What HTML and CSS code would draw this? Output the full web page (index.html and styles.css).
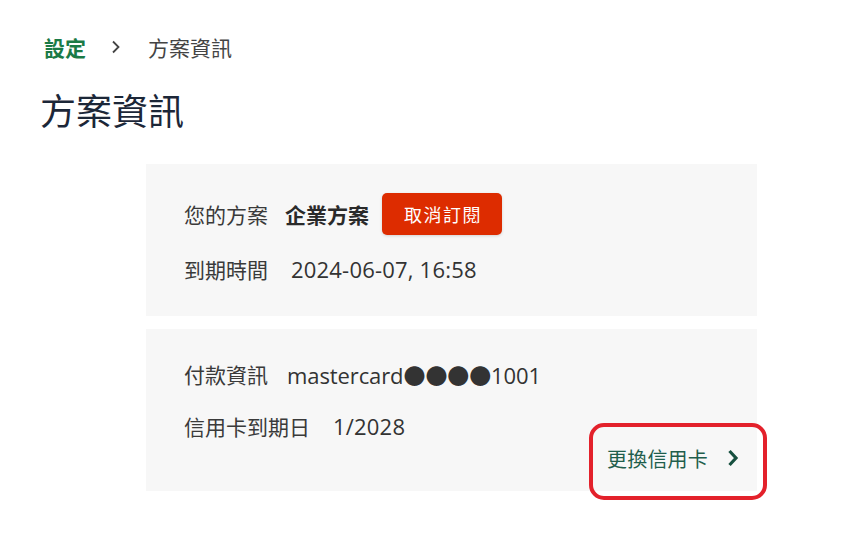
FILE: index.html
```html
<!DOCTYPE html>
<html lang="zh-Hant">
<head>
  <meta charset="UTF-8">
  <meta name="viewport" content="width=device-width, initial-scale=1.0">
  <title>方案資訊</title>
  <link rel="stylesheet" href="styles.css">
</head>
<body>
  <nav class="breadcrumb">
    <a href="#" class="crumb-link">設定</a>
    <svg class="crumb-sep" width="12" height="14" viewBox="0 0 12 14"><path d="M3 1.5 L8.5 7 L3 12.5" fill="none" stroke="currentColor" stroke-width="1.8"/></svg>
    <span class="crumb-current">方案資訊</span>
  </nav>
  <h1>方案資訊</h1>

  <main class="plan">
    <section class="card">
      <div class="row">
        <span class="label">您的方案</span>
        <strong class="plan-name">企業方案</strong>
        <button class="cancel">取消訂閱</button>
      </div>
      <div class="row">
        <span class="label">到期時間</span>
        <span class="value">2024-06-07, 16:58</span>
      </div>
    </section>

    <section class="card">
      <div class="row">
        <span class="label">付款資訊</span>
        <span class="value card-no">mastercard●●●●1001</span>
      </div>
      <div class="row">
        <span class="label">信用卡到期日</span>
        <span class="value">1/2028</span>
      </div>
      <div class="card-actions">
        <a href="#" class="change-card">
          更換信用卡
          <svg width="12" height="18" viewBox="0 0 12 18"><path d="M2.5 2 L9 9 L2.5 16" fill="none" stroke="currentColor" stroke-width="3.2"/></svg>
          <span class="highlight"></span>
        </a>
      </div>
    </section>
  </main>
</body>
</html>
```

FILE: styles.css
```css
body {
  font-family: "Open Sans", "Noto Sans CJK TC", sans-serif;
  color: #333;
  background: white;
  margin: 0;
  padding: 26px 40px;
}
.breadcrumb {
  display: flex;
  align-items: center;
  font-size: 21px;
  height: 42px;
  padding-left: 4px;
}
.crumb-link {
  color: #1b7a46;
  font-weight: bold;
  text-decoration: none;
}
.crumb-sep {
  margin: 0 26px 0 24px;
  color: #444;
}
.crumb-current {
  color: #444;
}
h1 {
  margin: 22px 0 30px;
  font-size: 36px;
  font-weight: normal;
  color: #1c2738;
  line-height: 44px;
}
.plan {
  margin-left: 106px;
  width: 611px;
}
.card {
  background: #f7f7f7;
  padding: 29px 38px 32px;
  margin-bottom: 13px;
  display: flex;
  flex-direction: column;
  gap: 19px;
}
.card + .card {
  padding-top: 29px;
  padding-bottom: 18px;
  gap: 21px;
}
.row {
  display: flex;
  align-items: center;
  min-height: 30px;
  font-size: 21px;
}
.label {
  margin-right: 19px;
  color: #3a3a3a;
}
.plan-name {
  color: #2a2a2a;
  margin-right: 13px;
  margin-left: -2px;
}
.value {
  font-size: 22px;
  letter-spacing: 0.2px;
  margin-left: 4px;
  color: #333;
}
.card-no {
  font-weight: 500;
  letter-spacing: -0.1px;
  margin-left: 0;
}
.cancel {
  background: #dd2c00;
  color: white;
  border: none;
  border-radius: 5px;
  font-family: inherit;
  font-size: 18px;
  letter-spacing: 1.5px;
  height: 42px;
  padding: 0 20px 0 22px;
  box-shadow: 0 1px 3px rgba(0,0,0,0.15);
}
.card-actions {
  display: flex;
  justify-content: flex-end;
  margin: -19px -20px 0 0;
}
.change-card {
  position: relative;
  display: flex;
  align-items: center;
  gap: 19px;
  font-size: 20px;
  letter-spacing: 0.2px;
  color: #1f5e4c;
  text-decoration: none;
  height: 30px;
}
.change-card svg {
  color: #17503f;
}
.highlight {
  position: absolute;
  left: -18px;
  top: -20px;
  right: -28px;
  bottom: -27px;
  border: 4px solid #e3212b;
  border-radius: 15px;
}
```
